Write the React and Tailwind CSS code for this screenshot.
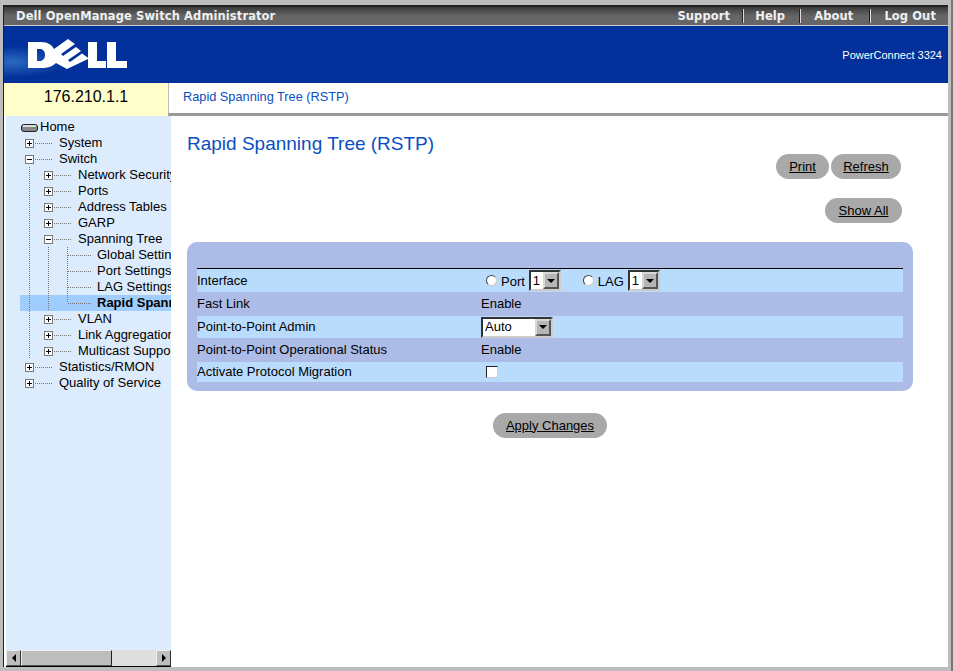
import React from "react";

const sans = "font-['Liberation_Sans',Arial,sans-serif]";

// rows of the left tree: guides = columns with a vertical dotted line before the node
const tree = [
  { text: "System", guides: [], kind: "plus" },
  { text: "Switch", guides: [], kind: "minus" },
  { text: "Network Security", guides: [1], kind: "plus" },
  { text: "Ports", guides: [1], kind: "plus" },
  { text: "Address Tables", guides: [1], kind: "plus" },
  { text: "GARP", guides: [1], kind: "plus" },
  { text: "Spanning Tree", guides: [1], kind: "minus" },
  { text: "Global Settings", guides: [1, 1], kind: "leaf" },
  { text: "Port Settings", guides: [1, 1], kind: "leaf" },
  { text: "LAG Settings", guides: [1, 1], kind: "leaf" },
  { text: "Rapid Spanning Tree", guides: [1, 1], kind: "last", active: true },
  { text: "VLAN", guides: [1], kind: "plus" },
  { text: "Link Aggregation", guides: [1], kind: "plus" },
  { text: "Multicast Support", guides: [1], kind: "plus" },
  { text: "Statistics/RMON", guides: [], kind: "plus" },
  { text: "Quality of Service", guides: [], kind: "plus" },
];

const Guide = () => (
  <svg width="19" height="16" className="shrink-0">
    <line x1="9.5" y1="0" x2="9.5" y2="16" stroke="#777" strokeDasharray="1 1" />
  </svg>
);

const Node = ({ kind }) => (
  <svg width="39" height="16" className="shrink-0">
    {kind === "leaf" || kind === "last" ? (
      <>
        <line x1="9.5" y1="0" x2="9.5" y2={kind === "last" ? 8 : 16} stroke="#777" strokeDasharray="1 1" />
        <line x1="10" y1="8.5" x2="33" y2="8.5" stroke="#777" strokeDasharray="1 1" />
      </>
    ) : (
      <>
        <line x1="15" y1="8.5" x2="33" y2="8.5" stroke="#777" strokeDasharray="1 1" />
        <rect x="5.5" y="4.5" width="8" height="8" fill="#fff" stroke="#777" />
        <line x1="7" y1="8.5" x2="12" y2="8.5" stroke="#000" />
        {kind === "plus" && <line x1="9.5" y1="6" x2="9.5" y2="11" stroke="#000" />}
      </>
    )}
  </svg>
);

const TreeRow = ({ row }) => (
  <div className={`ml-[14px] flex h-4 items-center whitespace-nowrap ${row.active ? "bg-[#9fcdfd] font-bold" : ""}`}>
    {row.guides.map((g, i) => (
      <Guide key={i} />
    ))}
    <Node kind={row.kind} />
    <span>{row.text}</span>
  </div>
);

const HomeIcon = () => (
  <svg width="18" height="11" className="shrink-0 mr-px">
    <rect x="0.5" y="2.5" width="16" height="7" rx="2.5" fill="#888" stroke="#222" />
    <rect x="2" y="3" width="13" height="2" fill="#ddd" />
    <rect x="12" y="5" width="3" height="1" fill="#2c2" />
  </svg>
);

// drawn mark, the tilted E is the logo itself
const DellLogo = () => (
  <svg width="102" height="32" viewBox="0 0 102 32" className="shrink-0">
    <path
      fill="#fff"
      fillRule="evenodd"
      d="M0 3H13C20 3 24.500 6.500 26 10L40 0L47 5L33 15L35 17L48 8L53 12L40 21L42 23L54 14.500L61 19.500L39 30L28 24C25 27 20 29 13 29H0ZM9 10V22H12C15 22 17 19.500 17 16C17 12.500 15 10 12 10Z"
    />
    <path fill="#fff" d="M60 3H69V22H78V29H60Z" />
    <path fill="#fff" d="M79 3H88V22H99V29H79Z" />
  </svg>
);

const Pill = ({ children, className = "" }) => (
  <button className={`h-[25px] rounded-full bg-[#a9a9a9] text-[13px] text-black underline ${className}`}>
    {children}
  </button>
);

const Arrow = () => (
  <span className="flex h-[17px] w-[16px] items-center justify-center border-2 border-[#d8d8d8] border-b-[#555] border-r-[#555] bg-[#b5b5b5]">
    <span className="h-0 w-0 border-x-[4px] border-t-[4px] border-x-transparent border-t-black" />
  </span>
);

const Select = ({ value, className }) => (
  <span className={`flex items-center justify-between border-2 border-[#333] border-b-[#ccc] border-r-[#ccc] bg-white ${className}`}>
    <span className="pl-[2px]">{value}</span>
    <Arrow />
  </span>
);

const Radio = () => (
  <span className="block h-[11px] w-[11px] rounded-full border border-[#444] border-b-[#ccc] border-r-[#ccc] bg-white" />
);

const rows = [
  {
    label: "Interface",
    value: (
      <div className="ml-[5px] flex items-center">
        <Radio />
        <span className="ml-[4px] mr-[4px] mt-[2px]">Port</span>
        <Select value="1" className="h-[21px] w-[32px]" />
        <span className="w-[22px]" />
        <Radio />
        <span className="ml-[4px] mr-[4px] mt-[2px]">LAG</span>
        <Select value="1" className="h-[21px] w-[32px]" />
      </div>
    ),
    h: "h-[23px]",
    light: true,
  },
  { label: "Fast Link", value: <span>Enable</span>, h: "h-6" },
  {
    label: "Point-to-Point Admin",
    value: <Select value="Auto" className="h-[21px] w-[72px]" />,
    h: "h-[22px]",
    light: true,
  },
  { label: "Point-to-Point Operational Status", value: <span>Enable</span>, h: "h-6" },
  {
    label: "Activate Protocol Migration",
    value: <span className="ml-[5px] block h-[12px] w-[12px] border border-[#222] border-b-[#ccc] border-r-[#ccc] bg-white" />,
    h: "h-5",
    light: true,
  },
];

export default function App() {
  return (
    <div className={`${sans} flex h-[671px] w-[953px] flex-col overflow-hidden border-r-2 border-[#777] bg-[#bdbdbd] pb-[4px] pl-[3px] pr-[3px] pt-[5px] text-[13px] leading-4 text-black`}>
      <div className="flex min-h-0 flex-1 flex-col border-l border-t-2 border-[#222] bg-white">
        {/* title bar */}
        <div className="flex h-[19px] shrink-0 items-center justify-between border-b border-[#ccc] bg-gradient-to-b from-[#3c3c3c] via-[#666] to-[#666] pl-[12px] pr-[12px] font-['DejaVu_Sans',sans-serif] text-[11.5px] font-bold tracking-[0.1px] text-[#f0f0f0]">
          <span>Dell OpenManage Switch Administrator</span>
          <div className="flex items-center">
            <span>Support</span>
            <span className="ml-[12px] mr-[11px] h-[14px] w-[2px] border-l border-r border-l-[#222] border-r-[#ddd]" />
            <span>Help</span>
            <span className="ml-[14px] mr-[13px] h-[14px] w-[2px] border-l border-r border-l-[#222] border-r-[#ddd]" />
            <span>About</span>
            <span className="ml-[16px] mr-[13px] h-[14px] w-[2px] border-l border-r border-l-[#222] border-r-[#ddd]" />
            <span>Log Out</span>
          </div>
        </div>
        {/* blue header */}
        <div className="flex h-[57px] shrink-0 items-center justify-between bg-[#03309a] bg-[radial-gradient(ellipse_55px_16px_at_8px_36px,#2a6ac0,transparent)] pl-[24px] pr-[6px]">
          <DellLogo />
          <span className="text-[11px] text-white">PowerConnect 3324</span>
        </div>
        {/* address + breadcrumb */}
        <div className="flex h-[33px] shrink-0">
          <div className="flex w-[164px] items-center justify-center bg-[#ffffcc] pb-[5px] text-[16px]">176.210.1.1</div>
          <div className="flex flex-1 items-center border-b-[3px] border-l border-b-[#999] border-l-[#bbb] pb-[3px] pl-[14px] text-[12.75px] text-[#0a4fc0]">
            Rapid Spanning Tree (RSTP)
          </div>
        </div>
        <div className="flex min-h-0 flex-1">
          {/* tree */}
          <div className="flex w-[167px] shrink-0 flex-col pl-[2px]">
            <div className="min-h-0 flex-1 overflow-hidden bg-[#dcecfc] pt-[3px]">
              <div className="ml-[15px] flex h-4 items-center">
                <HomeIcon />
                <span>Home</span>
              </div>
              {tree.map((row) => (
                <TreeRow key={row.text} row={row} />
              ))}
            </div>
            <div className="flex h-[17px] shrink-0 items-stretch border-b border-black bg-[#dedede]">
              <span className="flex w-[15px] items-center justify-center border border-[#eee] border-b-[#555] border-r-[#333] bg-[#bdbdbd]">
                <span className="h-0 w-0 border-y-[4px] border-r-[4px] border-y-transparent border-r-black" />
              </span>
              <span className="w-[91px] border border-[#eee] border-b-[#555] border-r-[#222] bg-[#bdbdbd]" />
              <span className="flex-1" />
              <span className="flex w-[15px] items-center justify-center border border-[#eee] border-b-[#555] border-r-[#333] bg-[#bdbdbd]">
                <span className="h-0 w-0 border-y-[4px] border-l-[4px] border-y-transparent border-l-black" />
              </span>
            </div>
          </div>
          {/* main */}
          <div className="min-w-0 flex-1 bg-white pl-[16px] pr-[35px]">
            <h1 className="pt-[18px] text-[19px] leading-[20px] text-[#0a4fc0]">Rapid Spanning Tree (RSTP)</h1>
            <div className="mr-[12px] flex justify-end gap-[2px]">
              <Pill className="w-[53px]">Print</Pill>
              <Pill className="w-[70px]">Refresh</Pill>
            </div>
            <div className="mr-[11px] mt-[19px] flex justify-end">
              <Pill className="w-[77px]">Show All</Pill>
            </div>
            <div className="mt-[19px] rounded-[10px] bg-[#adbce6] px-[10px] pb-[9px] pt-[26px]">
              <div className="border-t border-black">
                {rows.map((r) => (
                  <div key={r.label} className={`flex items-center ${r.h} ${r.light ? "bg-[#b9dcfd]" : ""}`}>
                    <span className="w-[284px] shrink-0">{r.label}</span>
                    {r.value}
                  </div>
                ))}
              </div>
            </div>
            <div className="mt-[22px] flex justify-center">
              <Pill className="w-[114px]">Apply Changes</Pill>
            </div>
          </div>
        </div>
      </div>
    </div>
  );
}
